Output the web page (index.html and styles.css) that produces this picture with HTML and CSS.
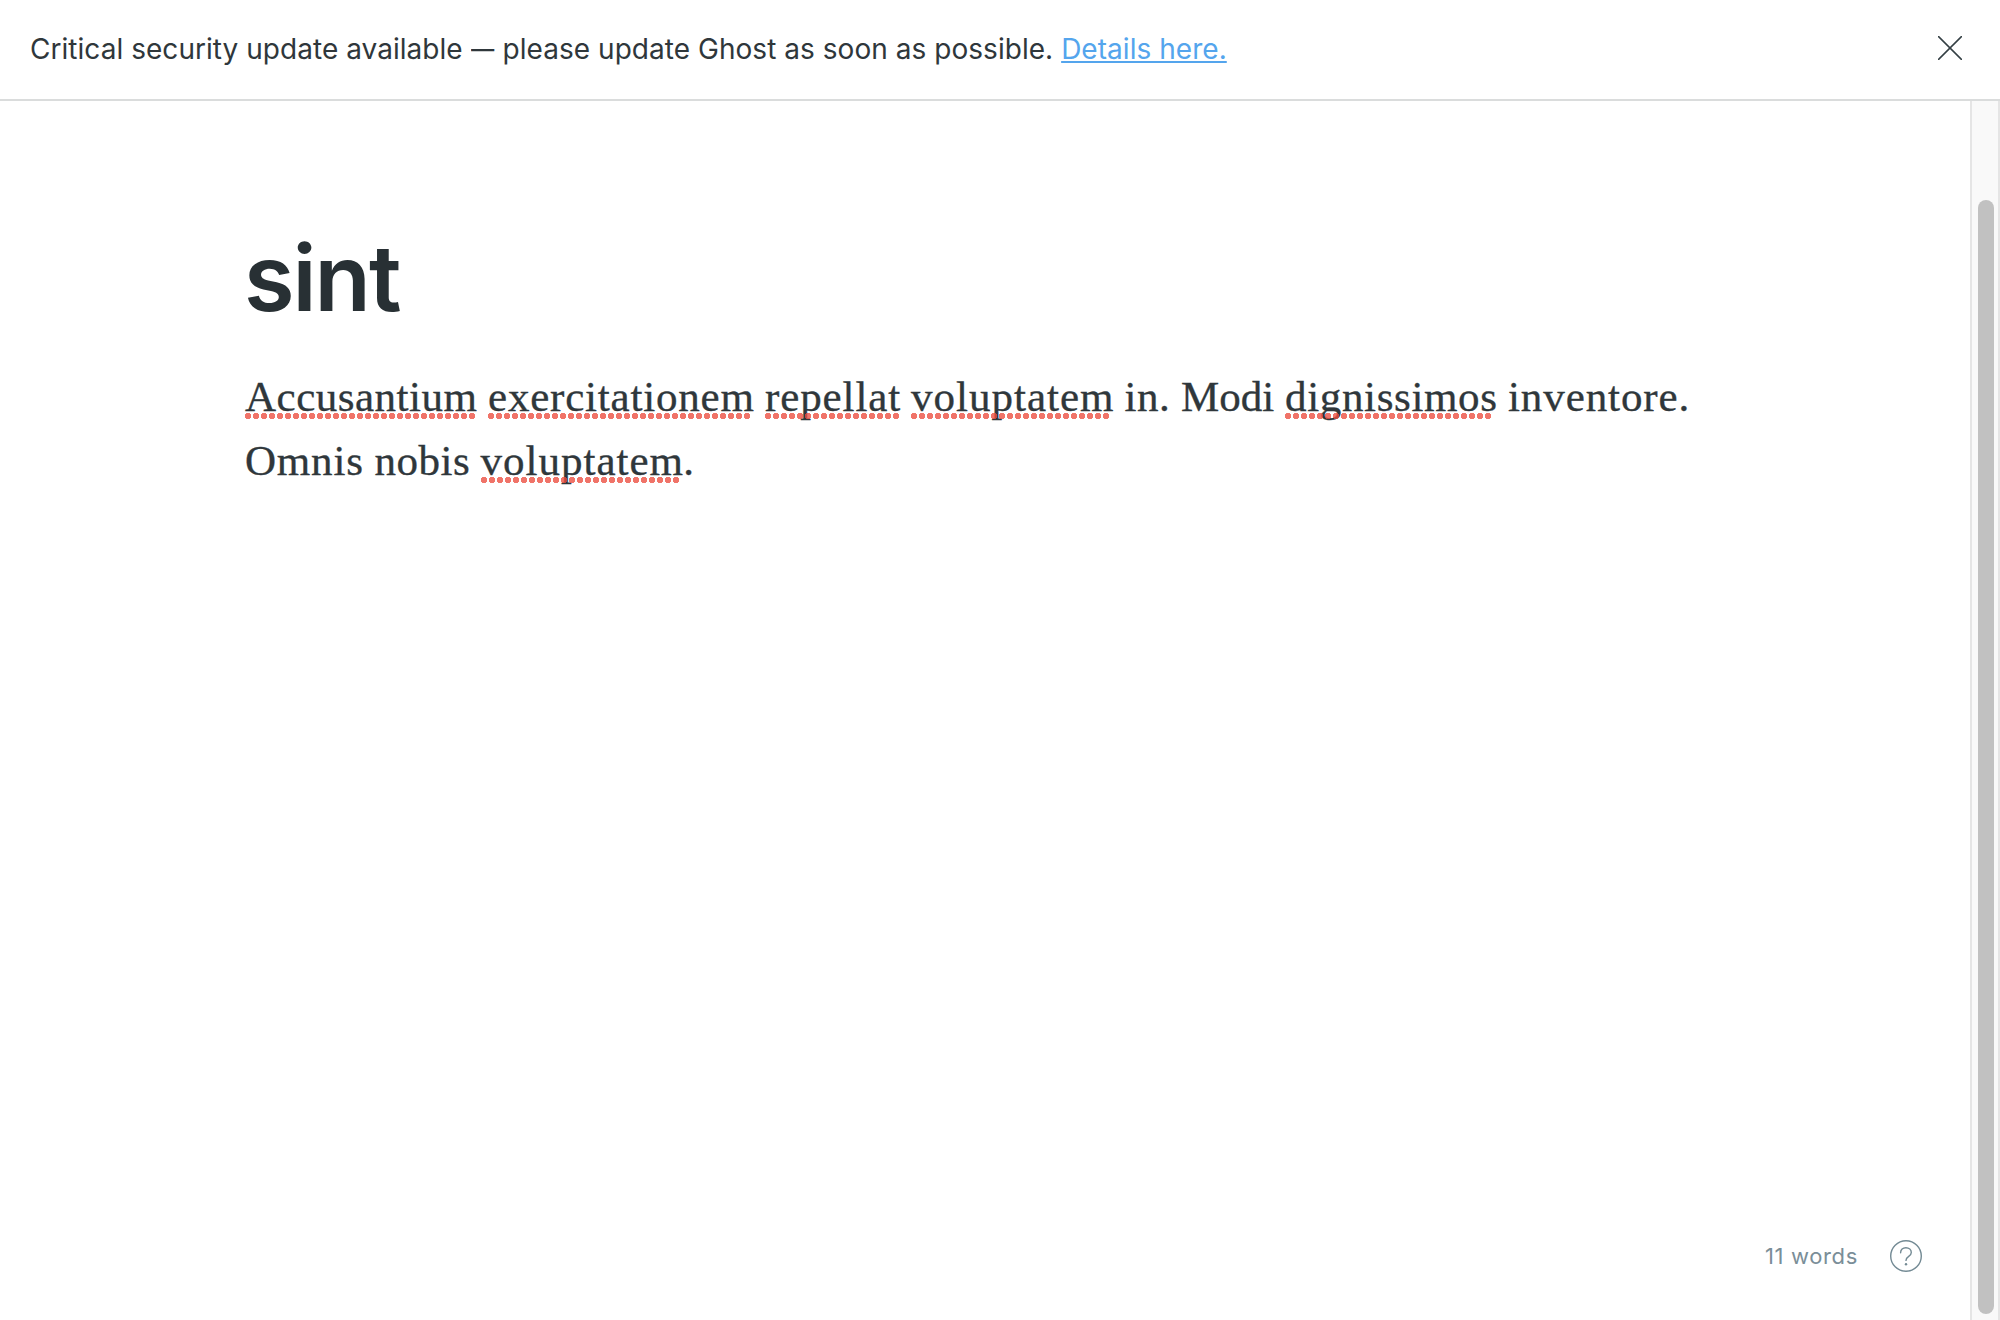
FILE: index.html
```html
<!DOCTYPE html>
<html lang="en">
<head>
<meta charset="utf-8">
<title>Editor</title>
<link rel="stylesheet" href="styles.css">
</head>
<body>
<header class="alert">
  <p class="alert-text">Critical security update available <span class="dash">—</span> please update Ghost as soon as possible. <a class="alert-link" href="#">Details here.</a></p>
  <button class="alert-close" aria-label="Close"><svg width="24" height="24" viewBox="0 0 24 24" fill="none" stroke="currentColor" stroke-width="1.5" stroke-linecap="round"><path d="M.6.6l22.8 22.8M23.4.6L.6 23.4"/></svg></button>
</header>
<div class="workspace">
  <main class="editor">
    <article class="post">
      <h1 class="title">sint</h1>
      <p class="line"><span class="w w1 miss">Accusantium</span> <span class="w w2 miss">exercitationem</span> <span class="w w3 miss">repellat</span> <span class="w w4 miss">voluptatem</span> <span class="w w5">in.</span> <span class="w w6">Modi</span> <span class="w w7 miss">dignissimos</span> <span class="w w8">inventore.</span></p>
      <p class="line"><span class="w w9">Omnis</span> <span class="w w10">nobis</span> <span class="w w4 miss">voluptatem</span><span>.</span></p>
    </article>
    <footer class="status">
      <span class="count">11 words</span>
      <svg class="help" width="32" height="32" viewBox="0 0 32 32" fill="none" stroke="currentColor" stroke-width="1.4" stroke-linecap="round"><circle cx="16" cy="16" r="15.3"/><path d="M10.6 12.8c0-3.1 2.2-5.1 5.3-5.1s5.4 2 5.4 4.8c0 4.2-5.3 3.5-5.3 7.9"/><circle cx="16" cy="24.2" r="1.2" fill="currentColor" stroke="none"/></svg>
    </footer>
  </main>
  <aside class="scrollbar"><div class="thumb"></div></aside>
</div>
</body>
</html>
```

FILE: styles.css
```css
* { box-sizing: border-box; }
body {
  margin: 0;
  height: 1320px;
  display: flex;
  flex-direction: column;
  background: #fff;
  color: #2f373b;
  font-family: Inter, sans-serif;
  overflow: hidden;
}
.alert {
  flex: none;
  height: 101px;
  border-bottom: 2px solid #dadcdc;
  display: flex;
  justify-content: space-between;
  align-items: center;
  padding: 0 38px 0 30px;
}
.alert-text {
  margin: 0;
  padding-bottom: 2px;
  font-size: 28px;
  line-height: 40px;
  letter-spacing: .04px;
  white-space: nowrap;
}
.dash {
  display: inline-block;
  width: 24px;
  transform: scaleX(.83);
  transform-origin: left;
}
.alert-link {
  color: #54a5ed;
  text-decoration-thickness: 2px;
  text-underline-offset: 2px;
  text-decoration-skip-ink: none;
}
.alert-close {
  border: 0;
  padding: 0 0 3px;
  background: none;
  color: #343f44;
  display: flex;
}
.workspace { flex: 1; display: flex; min-height: 0; }
.editor {
  flex: 1;
  display: flex;
  flex-direction: column;
  justify-content: space-between;
}
.post { padding: 122px 244px 0; }
.title {
  margin: 0 0 32px;
  font-size: 92px;
  line-height: 110px;
  font-weight: 600;
  letter-spacing: -2px;
  color: #283034;
}
.line {
  margin: 0;
  padding-left: 1px;
  font-family: "Liberation Serif", serif;
  font-size: 43px;
  line-height: 64px;
  white-space: nowrap;
  -webkit-text-stroke: .35px currentColor;
}
.w { display: inline-block; }
.w1 { width: 232.25px; letter-spacing: .5px; }
.w2 { width: 266.25px; letter-spacing: .8px; }
.w3 { width: 135.25px; letter-spacing: .9px; }
.w4 { width: 202.75px; letter-spacing: 1px; }
.w5 { width: 45.75px; letter-spacing: .5px; }
.w6 { width: 93.25px; }
.w7 { width: 212.25px; letter-spacing: .65px; }
.w8 { letter-spacing: .9px; }
.w9 { width: 118.75px; letter-spacing: .8px; }
.w10 { width: 95.25px; letter-spacing: .5px; }
.miss { position: relative; }
.miss::after {
  content: "";
  position: absolute;
  left: 0;
  width: round(down, 100% + 1px, 8px);
  top: 48px;
  height: 6px;
  background: radial-gradient(circle at 3px 3px, rgba(236, 76, 62, .78) 2.9px, transparent 3.4px) 0 0 / 8px 6px repeat-x;
}
.status {
  display: flex;
  align-items: center;
  justify-content: flex-end;
  gap: 32px;
  padding: 0 48px 48px 0;
  color: #7a8e98;
}
.count { font-size: 22px; line-height: 32px; letter-spacing: .65px; }
.help { color: #738a94; }
.scrollbar {
  flex: none;
  width: 30px;
  border: solid #e5e5e5;
  border-width: 0 2px;
  background: #f9f9f9;
  padding: 99px 4px 6px 6px;
}
.thumb { height: 100%; border-radius: 8px; background: #c1c1c1; }
```
